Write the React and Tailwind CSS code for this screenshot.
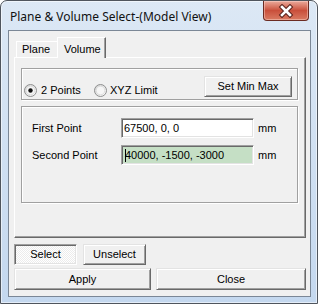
import React from "react";

const raised =
  "bg-[#f0f0f0] border border-t-[#e3e3e3] border-l-[#e3e3e3] border-r-[#696969] border-b-[#696969] shadow-[inset_1px_1px_0_#fff,inset_-1px_-1px_0_#a0a0a0]";
const sunken =
  "border border-t-[#a0a0a0] border-l-[#a0a0a0] border-r-white border-b-white shadow-[inset_1px_1px_0_#696969,inset_-1px_-1px_0_#e3e3e3]";
const etched =
  "border border-[#a0a0a0] shadow-[inset_1px_1px_0_#fff,1px_1px_0_#fff]";

const Radio = ({ checked }) => (
  <svg width="13" height="13" viewBox="0 0 13 13">
    <defs>
      <linearGradient id={checked ? "rg1" : "rg0"} x1="0" y1="0" x2="1" y2="1">
        <stop offset="0" stopColor="#d0d0d0" />
        <stop offset="1" stopColor="#ffffff" />
      </linearGradient>
    </defs>
    <circle cx="6.5" cy="6.5" r="6" fill={`url(#${checked ? "rg1" : "rg0"})`} stroke="#8e8f8f" />
    <circle cx="6.5" cy="6.5" r="4.3" fill="#f6f6f6" stroke="#d8d8d8" strokeWidth="0.8" />
    {checked && <circle cx="6.5" cy="6.5" r="2.2" fill="#111" />}
  </svg>
);

const Btn = ({ children, className = "" }) => (
  <div className={`flex items-center justify-center ${raised} ${className}`}>{children}</div>
);

export default function App() {
  return (
    <div className="w-[318px] h-[304px] flex flex-col bg-linear-to-b from-[#dce8f5] to-[#c4d8ef] border border-[#4f555d] rounded-t-[7px] shadow-[inset_0_0_0_1px_rgba(255,255,255,0.55)] font-['Liberation_Sans',Arial,sans-serif] text-[11px] text-black">
      {/* title bar */}
      <div className="h-[29px] flex items-start shrink-0">
        <span className="pl-[9px] pt-[8px] text-[12px] leading-[16px] font-['Noto_Sans',sans-serif] text-[#111]">
          Plane &amp; Volume Select-(Model View)
        </span>
        <div className="ml-auto mr-[8px] w-[46px] h-[20px] flex items-center justify-center rounded-b-[4px] border border-t-0 border-[#6b2b22] bg-linear-to-b from-[#eaaa9c] via-[#c94f3b] to-[#d97a62] shadow-[inset_0_0_0_1px_rgba(255,220,210,0.45)]">
          <svg width="16" height="14" viewBox="0 0 16 14">
            <path d="M4 3 L12 11 M12 3 L4 11" stroke="#5a231c" strokeWidth="4.6" strokeLinecap="square" />
            <path d="M4 3 L12 11 M12 3 L4 11" stroke="#ffffff" strokeWidth="2.6" strokeLinecap="square" />
          </svg>
        </div>
      </div>

      {/* client area */}
      <div className="flex-1 ml-[7px] mr-[6px] mb-[6px] border border-[#7b8796] bg-[#f0f0f0] flex flex-col pl-[5px] pt-[6px]">
        {/* tab headers */}
        <div className="h-[21px] flex items-start pl-[2px] relative z-10">
          <div className="mt-[4px] w-[41px] h-[16px] flex items-center pl-[5px] border border-b-0 border-t-white border-l-white border-r-0 bg-[#f0f0f0]">
            Plane
          </div>
          <div className="w-[49px] h-[21px] flex items-start pt-[3px] pl-[6px] border border-b-0 border-t-white border-l-white border-r-[#696969] shadow-[inset_-1px_0_0_#a0a0a0] bg-[#f0f0f0]">
            Volume
          </div>
        </div>

        {/* tab panel */}
        <div className="-mt-px w-[292px] h-[181px] border border-t-white border-l-white border-r-[#696969] border-b-[#696969] shadow-[inset_-1px_-1px_0_#a0a0a0] flex flex-col pl-[6px] pt-[10px]">
          <div className={`w-[277px] h-[32px] flex items-start ${etched}`}>
            <div className="flex items-center pt-[13px] pl-[2px]">
              <div className="w-[70px] flex items-center gap-[4px]">
                <Radio checked />
                <span>2 Points</span>
              </div>
              <div className="flex items-center gap-[3px]">
                <Radio />
                <span>XYZ Limit</span>
              </div>
            </div>
            <Btn className="ml-auto mt-[7px] mr-[5px] w-[88px] h-[21px]">Set Min Max</Btn>
          </div>

          <div className={`mt-[6px] w-[277px] h-[97px] flex flex-col pl-[10px] pt-[11px] ${etched}`}>
            <div className="flex items-center h-[20px]">
              <span className="w-[89px]">First Point</span>
              <div className={`w-[133px] h-[20px] flex items-center pl-[2px] bg-white ${sunken}`}>
                67500, 0, 0
              </div>
              <span className="ml-[4px]">mm</span>
            </div>
            <div className="mt-[7px] flex items-center h-[20px]">
              <span className="w-[89px]">Second Point</span>
              <div className={`w-[133px] h-[20px] flex items-center pl-[3px] bg-[#c5dfc5] ${sunken}`}>
                <span className="inline-block w-px h-[13px] bg-black -mr-px" />
                40000, -1500, -3000
              </div>
              <span className="ml-[4px]">mm</span>
            </div>
          </div>
        </div>

        {/* bottom buttons */}
        <div className="mt-[6px] flex gap-[6px]">
          <div
            className={`w-[63px] h-[21px] flex items-center justify-center ${sunken} bg-[conic-gradient(#ffffff_25%,#ececec_0_50%,#ffffff_0_75%,#ececec_0)] bg-size-[2px_2px]`}
          >
            Select
          </div>
          <Btn className="w-[63px] h-[21px]">Unselect</Btn>
        </div>
        <div className="mt-[3px] flex gap-[5px]">
          <Btn className="w-[137px] h-[22px]">Apply</Btn>
          <Btn className="w-[150px] h-[22px]">Close</Btn>
        </div>
      </div>
    </div>
  );
}
